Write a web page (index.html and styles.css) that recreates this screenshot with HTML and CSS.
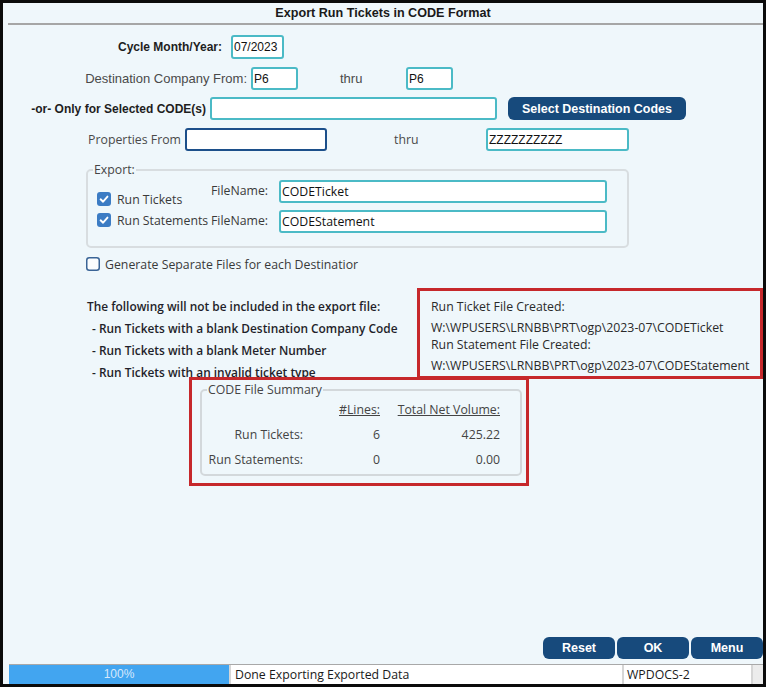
FILE: index.html
```html
<!DOCTYPE html>
<html>
<head>
<meta charset="utf-8">
<title>Export Run Tickets in CODE Format</title>
<link rel="stylesheet" href="styles.css">
</head>
<body>
<div class="window">
  <div class="title">Export Run Tickets in CODE Format</div>
  <div class="title-rule"></div>

  <div class="row row-cycle">
    <span class="lbl lbl-cycle">Cycle Month/Year:</span>
    <span class="inp w-cycle">07/2023</span>
  </div>

  <div class="row row-dest">
    <span class="lbl lbl-dest">Destination Company From:</span>
    <span class="inp w-p6">P6</span>
    <span class="thru thru-dest">thru</span>
    <span class="inp w-p6">P6</span>
  </div>

  <div class="row row-sel">
    <span class="lbl lbl-sel">-or- Only for Selected CODE(s)</span>
    <span class="inp w-sel"></span>
    <span class="btn btn-sel">Select Destination Codes</span>
  </div>

  <div class="row row-prop">
    <span class="lbl lbl-prop">Properties From</span>
    <span class="inp inp-focus w-prop"></span>
    <span class="thru thru-prop">thru</span>
    <span class="inp w-prop2">ZZZZZZZZZZ</span>
  </div>

  <fieldset class="group export">
    <legend>Export:</legend>
    <div class="frow frow-a">
      <span class="chk-lbl chk-a">
        <svg class="cb" viewBox="0 0 14 14" width="14" height="14"><rect x="0" y="0" width="14" height="14" rx="3" fill="#3c7cc4"/><path d="M3.6 7.3 L6.1 9.7 L10.5 4.6" fill="none" stroke="#fff" stroke-width="1.9" stroke-linecap="round" stroke-linejoin="round"/></svg>
        <span>Run Tickets</span>
      </span>
      <span class="fn-lbl">FileName:</span>
      <span class="inp inp-fn w-fn">CODETicket</span>
    </div>
    <div class="frow frow-b">
      <span class="chk-lbl chk-b">
        <svg class="cb" viewBox="0 0 14 14" width="14" height="14"><rect x="0" y="0" width="14" height="14" rx="3" fill="#3c7cc4"/><path d="M3.6 7.3 L6.1 9.7 L10.5 4.6" fill="none" stroke="#fff" stroke-width="1.9" stroke-linecap="round" stroke-linejoin="round"/></svg>
        <span>Run Statements</span>
      </span>
      <span class="fn-lbl">FileName:</span>
      <span class="inp inp-fn w-fn">CODEStatement</span>
    </div>
  </fieldset>

  <div class="gen">
    <svg class="cb" viewBox="0 0 14 14" width="14" height="14"><rect x="0.75" y="0.75" width="12.5" height="12.5" rx="2.5" fill="#fbfdfe" stroke="#3a6496" stroke-width="1.5"/></svg>
    <span>Generate Separate Files for each Destinatior</span>
  </div>

  <div class="results">
    <div class="notes">
      <div>The following will not be included in the export file:</div>
      <div class="item">- Run Tickets with a blank Destination Company Code</div>
      <div class="item">- Run Tickets with a blank Meter Number</div>
      <div class="item">- Run Tickets with an invalid ticket type</div>
    </div>
    <div class="created">
      <div>Run Ticket File Created:</div>
      <div class="path">W:\WPUSERS\LRNBB\PRT\ogp\2023-07\CODETicket</div>
      <div>Run Statement File Created:</div>
      <div class="path">W:\WPUSERS\LRNBB\PRT\ogp\2023-07\CODEStatement</div>
    </div>
  </div>

  <div class="summary-wrap">
    <fieldset class="group summary">
      <legend>CODE File Summary</legend>
      <div class="sgrid">
        <span></span>
        <span class="hdr">#Lines:</span>
        <span class="hdr">Total Net Volume:</span>
        <span>Run Tickets:</span>
        <span>6</span>
        <span>425.22</span>
        <span>Run Statements:</span>
        <span>0</span>
        <span>0.00</span>
      </div>
    </fieldset>
  </div>

  <div class="buttons">
    <span class="btn btn-foot">Reset</span>
    <span class="btn btn-foot">OK</span>
    <span class="btn btn-foot">Menu</span>
  </div>

  <div class="status">
    <div class="progress">100%</div>
    <div class="sfield sfield-msg">Done Exporting Exported Data</div>
    <div class="sfield sfield-host">WPDOCS-2</div>
    <div class="sfill"></div>
  </div>
</div>
</body>
</html>
```

FILE: styles.css
```css
body {
  margin: 0;
  background: #ffffff;
}

.window {
  width: 766px;
  height: 687px;
  box-sizing: border-box;
  border: 3px solid #0b0b0b;
  background: #eff7fb;
  display: flex;
  flex-direction: column;
  font-family: "Open Sans", "Liberation Sans", sans-serif;
  font-size: 12.3px;
  color: #3a3a3a;
}

.title {
  height: 20px;
  line-height: 20px;
  text-align: center;
  font-family: "Liberation Sans", sans-serif;
  font-weight: bold;
  font-size: 12.6px;
  color: #1a1a1a;
}

.title-rule {
  height: 2px;
  margin-left: 5px;
  background: #a6a6a6;
}

.row {
  display: flex;
  align-items: center;
  height: 23px;
}

.row-cycle { margin-top: 10px; height: 24px; }
.row-dest { margin-top: 8px; }
.row-sel { margin-top: 7px; }
.row-prop { margin-top: 8px; }

.lbl {
  display: inline-block;
  text-align: right;
  font-family: "Liberation Sans", sans-serif;
  font-size: 13px;
  color: #4a4a4a;
}

.lbl-cycle {
  width: 219px;
  margin-right: 9px;
  font-weight: bold;
  font-size: 12px;
  color: #1e1e1e;
}

.lbl-dest {
  width: 244px;
  margin-right: 4px;
}

.lbl-sel {
  width: 203px;
  margin-right: 4px;
  font-weight: bold;
  font-size: 12px;
  color: #1e1e1e;
}

.lbl-prop {
  width: 178px;
  margin-right: 4px;
  font-family: "Open Sans", sans-serif;
  font-size: 12.3px;
}

.thru {
  display: inline-block;
  font-family: "Liberation Sans", sans-serif;
  font-size: 13px;
  color: #4a4a4a;
}

.thru-dest { margin-left: 42px; width: 66px; }
.thru-prop { margin-left: 67px; width: 92px; font-family: "Open Sans", sans-serif; font-size: 12.3px; }

.inp {
  box-sizing: border-box;
  height: 100%;
  border: 2px solid #4bbac6;
  border-radius: 3px;
  background: #ffffff;
  font-family: "Liberation Sans", sans-serif;
  font-size: 12px;
  color: #111111;
  padding: 0 1px;
  display: flex;
  align-items: center;
}

.inp-focus { border-color: #1c4f8a; }

.w-cycle { width: 53px; }
.w-p6 { width: 47px; }
.w-sel { width: 287px; }
.w-prop { width: 142px; }
.w-prop2 { width: 143px; }
.w-fn { width: 328px; height: 23px; }

.inp-fn {
  font-family: "Open Sans", sans-serif;
  font-size: 12.3px;
  padding-left: 1px;
}

.btn {
  box-sizing: border-box;
  display: flex;
  align-items: center;
  justify-content: center;
  background: #174a7c;
  color: #ffffff;
  font-family: "Liberation Sans", sans-serif;
  font-weight: bold;
  font-size: 12.5px;
  border-radius: 6px;
}

.btn-sel {
  width: 178px;
  height: 23px;
  margin-left: 11px;
}

.group {
  box-sizing: border-box;
  border: 2px solid #d8dde0;
  border-radius: 5px;
  min-width: 0;
}

.group legend {
  margin-left: 5px;
  padding: 0 1px;
  line-height: 14px;
  font-size: 12.3px;
  color: #454545;
}

.export {
  width: 543px;
  margin: 12px 0 0 83px;
  padding: 0 0 13px 0;
}

.frow {
  display: flex;
  align-items: flex-start;
  height: 23px;
  padding-left: 9px;
}

.frow-a { margin-top: 3px; }
.frow-b { margin-top: 7px; }

.chk-lbl {
  width: 114px;
  height: 14px;
  display: flex;
  align-items: center;
  gap: 6px;
  white-space: nowrap;
}

.chk-a { margin-top: 12px; }
.chk-b { margin-top: 3px; }

.cb { display: block; flex: none; }

.fn-lbl {
  width: 68px;
  line-height: 21px;
}

.gen {
  display: flex;
  align-items: center;
  gap: 5px;
  height: 14px;
  margin: 9px 0 0 83px;
}

.results {
  display: flex;
  align-items: flex-start;
  margin-top: 17px;
}

.notes {
  box-sizing: border-box;
  width: 416px;
  padding: 7px 0 0 84px;
  line-height: 22px;
  font-size: 11.9px;
  font-weight: 600;
  color: #1f1f2a;
  white-space: nowrap;
}

.notes .item { padding-left: 5px; }

.created {
  box-sizing: border-box;
  width: 346px;
  height: 91px;
  flex: none;
  border: 3px solid #c6282b;
  padding: 7px 0 0 11px;
  line-height: 17px;
  color: #2a2a2a;
  white-space: nowrap;
}

.created .path { margin-top: 4px; }

.summary-wrap {
  box-sizing: border-box;
  width: 340px;
  height: 109px;
  margin: -6px 0 0 186px;
  border: 3px solid #c6282b;
  padding: 3px 0 0 8px;
}

.summary {
  width: 322px;
  margin: 0;
  padding: 0 0 2px 0;
  border-color: #d3d8db;
}

.sgrid {
  display: grid;
  grid-template-columns: 101px 77px 120px;
  grid-auto-rows: 25px;
  align-items: center;
  text-align: right;
  color: #444444;
}

.sgrid .hdr { text-decoration: underline; }

.buttons {
  margin-top: auto;
  display: flex;
  justify-content: flex-end;
  gap: 2px;
}

.btn-foot {
  width: 72px;
  height: 22px;
}

.status {
  display: flex;
  gap: 2px;
  height: 19px;
  margin: 5px 0 0 6px;
  border-top: 1px solid #a8a8a8;
  background: #d6d6d6;
}

.progress {
  width: 220px;
  background: #42a5f0;
  color: #d8e8fb;
  text-align: center;
  font-family: "Liberation Sans", sans-serif;
  font-size: 12px;
  line-height: 19px;
}

.sfield {
  box-sizing: border-box;
  background: #ffffff;
  padding-left: 4px;
  line-height: 19px;
  color: #1a1a1a;
}

.sfield-msg { width: 391px; }
.sfield-host { width: 127px; padding-left: 3px; }

.sfill {
  flex: 1;
  background: #ececec;
}
```
